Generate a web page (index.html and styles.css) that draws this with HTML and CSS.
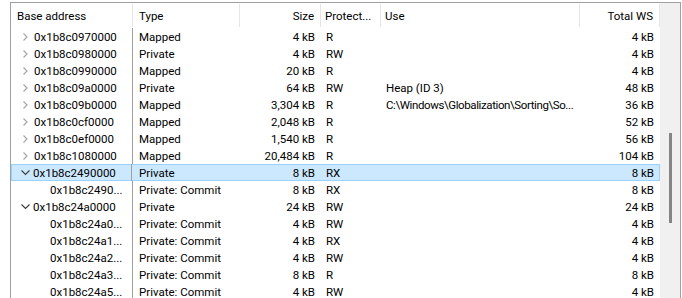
FILE: index.html
```html
<!DOCTYPE html>
<html>
<head>
<meta charset="utf-8">
<link rel="stylesheet" href="styles.css">
</head>
<body>
<div class="frame">
  <div class="list">
    <div class="header">
      <div class="hc left first">Base address</div>
      <div class="hc left">Type</div>
      <div class="hc right">Size</div>
      <div class="hc left narrow">Protect...</div>
      <div class="hc left narrow">Use</div>
      <div class="hc right">Total WS</div>
    </div>
    <div class="rows">
      <div class="row"><div class="c addr"><svg class="chev" width="5" height="8" viewBox="0 0 5 8"><polyline points="0.5,0.5 4,4 0.5,7.5"/></svg>0x1b8c0970000</div><div class="c type">Mapped</div><div class="c num">4 kB</div><div class="c prot">R</div><div class="c use"></div><div class="c ws">4 kB</div></div>
      <div class="row"><div class="c addr"><svg class="chev" width="5" height="8" viewBox="0 0 5 8"><polyline points="0.5,0.5 4,4 0.5,7.5"/></svg>0x1b8c0980000</div><div class="c type">Private</div><div class="c num">4 kB</div><div class="c prot">RW</div><div class="c use"></div><div class="c ws">4 kB</div></div>
      <div class="row"><div class="c addr"><svg class="chev" width="5" height="8" viewBox="0 0 5 8"><polyline points="0.5,0.5 4,4 0.5,7.5"/></svg>0x1b8c0990000</div><div class="c type">Mapped</div><div class="c num">20 kB</div><div class="c prot">R</div><div class="c use"></div><div class="c ws">4 kB</div></div>
      <div class="row"><div class="c addr"><svg class="chev" width="5" height="8" viewBox="0 0 5 8"><polyline points="0.5,0.5 4,4 0.5,7.5"/></svg>0x1b8c09a0000</div><div class="c type">Private</div><div class="c num">64 kB</div><div class="c prot">RW</div><div class="c use">Heap (ID 3)</div><div class="c ws">48 kB</div></div>
      <div class="row"><div class="c addr"><svg class="chev" width="5" height="8" viewBox="0 0 5 8"><polyline points="0.5,0.5 4,4 0.5,7.5"/></svg>0x1b8c09b0000</div><div class="c type">Mapped</div><div class="c num">3,304 kB</div><div class="c prot">R</div><div class="c use tight">C:\Windows\Globalization\Sorting\So...</div><div class="c ws">36 kB</div></div>
      <div class="row"><div class="c addr"><svg class="chev" width="5" height="8" viewBox="0 0 5 8"><polyline points="0.5,0.5 4,4 0.5,7.5"/></svg>0x1b8c0cf0000</div><div class="c type">Mapped</div><div class="c num">2,048 kB</div><div class="c prot">R</div><div class="c use"></div><div class="c ws">52 kB</div></div>
      <div class="row"><div class="c addr"><svg class="chev" width="5" height="8" viewBox="0 0 5 8"><polyline points="0.5,0.5 4,4 0.5,7.5"/></svg>0x1b8c0ef0000</div><div class="c type">Mapped</div><div class="c num">1,540 kB</div><div class="c prot">R</div><div class="c use"></div><div class="c ws">56 kB</div></div>
      <div class="row"><div class="c addr"><svg class="chev" width="5" height="8" viewBox="0 0 5 8"><polyline points="0.5,0.5 4,4 0.5,7.5"/></svg>0x1b8c1080000</div><div class="c type">Mapped</div><div class="c num">20,484 kB</div><div class="c prot">R</div><div class="c use"></div><div class="c ws">104 kB</div></div>
      <div class="row selected"><div class="c addr"><svg class="chev open" width="9" height="6" viewBox="0 0 9 6"><polyline points="0.5,0.5 4.5,4.5 8.5,0.5"/></svg>0x1b8c2490000</div><div class="c type">Private</div><div class="c num">8 kB</div><div class="c prot">RX</div><div class="c use"></div><div class="c ws">8 kB</div></div>
      <div class="row"><div class="c addr child">0x1b8c2490...</div><div class="c type">Private: Commit</div><div class="c num">8 kB</div><div class="c prot">RX</div><div class="c use"></div><div class="c ws">8 kB</div></div>
      <div class="row"><div class="c addr"><svg class="chev open" width="9" height="6" viewBox="0 0 9 6"><polyline points="0.5,0.5 4.5,4.5 8.5,0.5"/></svg>0x1b8c24a0000</div><div class="c type">Private</div><div class="c num">24 kB</div><div class="c prot">RW</div><div class="c use"></div><div class="c ws">24 kB</div></div>
      <div class="row"><div class="c addr child">0x1b8c24a0...</div><div class="c type">Private: Commit</div><div class="c num">4 kB</div><div class="c prot">RW</div><div class="c use"></div><div class="c ws">4 kB</div></div>
      <div class="row"><div class="c addr child">0x1b8c24a1...</div><div class="c type">Private: Commit</div><div class="c num">4 kB</div><div class="c prot">RX</div><div class="c use"></div><div class="c ws">4 kB</div></div>
      <div class="row"><div class="c addr child">0x1b8c24a2...</div><div class="c type">Private: Commit</div><div class="c num">4 kB</div><div class="c prot">RW</div><div class="c use"></div><div class="c ws">4 kB</div></div>
      <div class="row"><div class="c addr child">0x1b8c24a3...</div><div class="c type">Private: Commit</div><div class="c num">8 kB</div><div class="c prot">R</div><div class="c use"></div><div class="c ws">8 kB</div></div>
      <div class="row"><div class="c addr child">0x1b8c24a5...</div><div class="c type">Private: Commit</div><div class="c num">4 kB</div><div class="c prot">RW</div><div class="c use"></div><div class="c ws">4 kB</div></div>
    </div>
  </div>
  <div class="scroll"><div class="thumb"></div></div>
</div>
</body>
</html>
```

FILE: styles.css
```css
html, body {
  margin: 0;
  padding: 0;
  background: #ffffff;
  overflow: hidden;
  width: 682px;
  height: 298px;
}
body {
  font-family: Roboto, "Noto Sans", sans-serif;
  font-size: 11.5px;
  color: #000;
}
.frame {
  display: flex;
  margin: 2px 0 0 10px;
  width: 669px;
  height: 295px;
  overflow: hidden;
  border-top: 1px solid #a0a0a0;
  border-left: 1px solid #a0a0a0;
  border-right: 1px solid #a0a0a0;
}
.list {
  width: 649px;
  flex: none;
}
.scroll {
  width: 20px;
  flex: none;
  background: #f0f0f0;
}
.thumb {
  margin: 130px 0 0 9px;
  width: 3px;
  height: 90px;
  background: #858585;
}
.header {
  display: grid;
  grid-template-columns: 122px 107px 81px 60px 199px 80px;
  height: 25px;
  align-items: center;
}
.hc {
  height: 23px;
  line-height: 23px;
  padding-top: 1px;
  border-right: 1px solid #e5e5e5;
  box-sizing: border-box;
  white-space: nowrap;
  overflow: hidden;
}
.hc.left { padding-left: 6px; }
.hc.narrow { padding-left: 4px; }
.hc.right { text-align: right; padding-right: 6px; }
.row {
  display: grid;
  grid-template-columns: 121px 107px 81px 60px 199px 80px;
  height: 17px;
  box-sizing: border-box;
  border: 1px solid transparent;
  border-left-width: 0;
  margin-left: 1px;
  align-items: center;
}
.row.selected {
  background: #cce8ff;
  border-color: #99d1ff;
  border-left-width: 1px;
  margin-left: 0;
  padding-left: 0;
}
.row.selected .addr { width: 120px; }
.c {
  white-space: nowrap;
  overflow: hidden;
  line-height: 15px;
  height: 15px;
  padding-top: 1px;
  box-sizing: border-box;
}
.addr {
  display: flex;
  align-items: center;
  padding-left: 11px;
  height: 17px;
  margin: -1px 0;
  border-right: 1px solid #a0a0a0;
  box-sizing: border-box;
}
.addr.child { padding-left: 38px; }
.chev {
  flex: none;
  margin-right: 6px;
  fill: none;
  stroke: #a6a6a6;
  stroke-width: 1.2;
}
.chev.open {
  stroke: #404040;
  margin-left: -2px;
  margin-right: 3px;
}
.type { padding-left: 6px; }
.num { text-align: right; padding-right: 6px; }
.prot { padding-left: 5px; }
.use { padding-left: 5px; }
.use.tight { letter-spacing: -0.4px; }
.ws { text-align: right; padding-right: 6px; }
```
